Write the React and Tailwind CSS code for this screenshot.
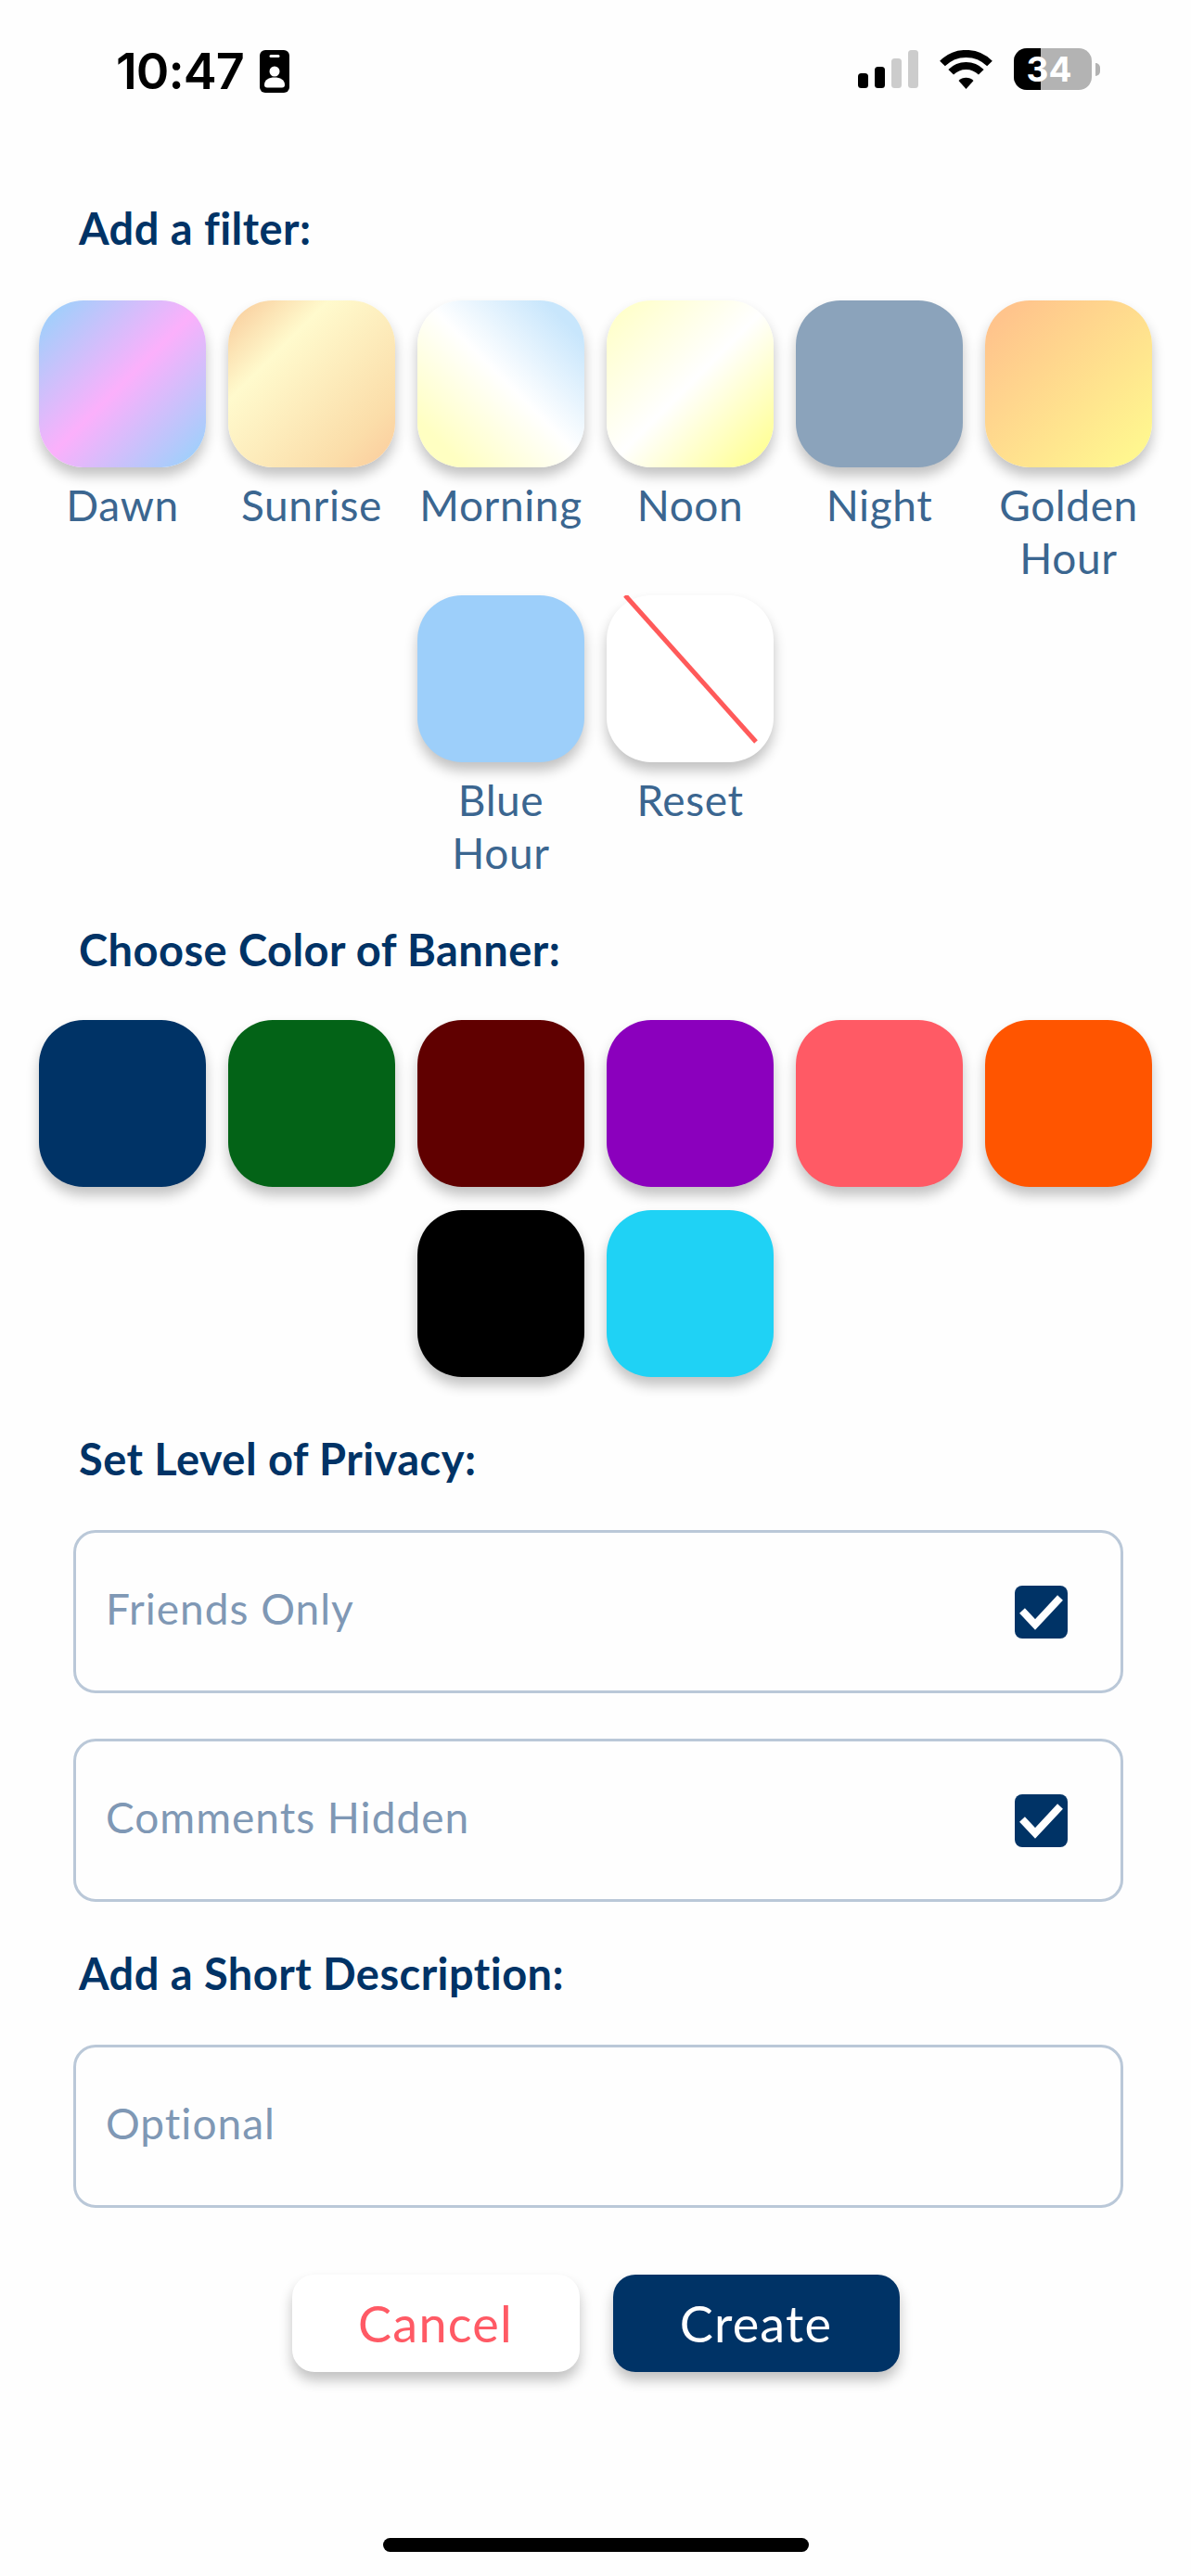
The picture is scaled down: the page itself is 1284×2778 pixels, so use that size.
const font = { fontFamily: '"Lato", "Noto Sans", sans-serif' };

function Swatch({ className = "", children }) {
  return (
    <div className={`relative w-[180px] h-[180px] rounded-[48px] shadow-[0_9px_14px_rgba(0,0,0,0.24)] ${className}`}>
      {children}
    </div>
  );
}

function Filter({ label, className, children }) {
  return (
    <div className="w-[180px] flex flex-col items-center">
      <Swatch className={className}>{children}</Swatch>
      <div className="mt-[12px] text-center text-[46px] leading-[57px] tracking-[0.6px] text-[#3b6690]">{label}</div>
    </div>
  );
}

function Title({ children, className = "" }) {
  return <div className={`px-[85px] text-[47px] leading-[57px] font-bold tracking-[0.45px] text-[#003366] ${className}`}>{children}</div>;
}

function CheckBox() {
  return (
    <div className="w-[57px] h-[57px] rounded-[8px] bg-[#003366]">
      <svg width="57" height="57" viewBox="0 0 57 57" fill="none">
        <path d="M8 27 L22 42 L49 13" stroke="#fff" strokeWidth="8" />
      </svg>
    </div>
  );
}

function Field({ label, checked, className = "" }) {
  return (
    <div className={`ml-[79px] w-[1132px] h-[176px] rounded-[24px] border-[3px] border-[#bac8d8] flex items-center justify-between pl-[32px] pr-[57px] ${className}`}>
      <span className="pb-[7px] text-[46px] tracking-[1px] text-[#7f98b5]">{label}</span>
      {checked && <CheckBox />}
    </div>
  );
}

function StatusBar() {
  return (
    <div className="h-[150px] pt-[54px] pl-[125px] pr-[98px] flex items-start justify-between">
      <div className="flex items-start">
        <span className="text-[54px] leading-[46px] font-semibold text-black tracking-[-1px]" style={{ fontFamily: '"Inter", sans-serif' }}>10:47</span>
        <svg className="ml-[17px]" width="32" height="46" viewBox="0 0 32 46">
          <rect width="32" height="46" rx="6" fill="#000" />
          <rect x="10.5" y="5" width="11" height="3" rx="1.5" fill="#fff" />
          <circle cx="16" cy="23" r="5.5" fill="#fff" />
          <path d="M5 37.5 C5 32 10 29.5 16 29.5 C22 29.5 27 32 27 37.5 C27 39.5 26 40.5 24 40.5 L8 40.5 C6 40.5 5 39.5 5 37.5 Z" fill="#fff" />
        </svg>
      </div>
      <div className="flex items-start">
        <svg width="65" height="41" viewBox="0 0 65 41">
          <rect x="0" y="25" width="11" height="16" rx="3.5" fill="#000" />
          <rect x="18" y="18" width="11" height="23" rx="3.5" fill="#000" />
          <rect x="36" y="9" width="11" height="32" rx="3.5" fill="#ccc" />
          <rect x="54" y="0" width="11" height="41" rx="3.5" fill="#ccc" />
        </svg>
        <svg className="ml-[23px]" width="57" height="42" viewBox="0 0 57 42" fill="none">
          <path d="M3 14.5 A36 36 0 0 1 54 14.5" stroke="#000" strokeWidth="8" />
          <path d="M12.2 23.7 A23 23 0 0 1 44.8 23.7" stroke="#000" strokeWidth="8" />
          <path d="M28.5 42 L20.5 33 A11.3 11.3 0 0 1 36.5 33 Z" fill="#000" />
        </svg>
        <div className="ml-[23px] relative flex items-center -mt-[2px]">
          <div className="relative w-[84px] h-[45px] rounded-[14px] overflow-hidden flex bg-[#b3b3b3]">
            <div className="w-[29px] h-full bg-black" />
          </div>
          <div className="absolute left-0 top-0 w-[84px] h-[45px] flex items-center justify-center pr-[8px] text-[37px] font-bold text-white" style={{ fontFamily: '"Inter", sans-serif' }}>34</div>
          <div className="ml-[4px] w-[5px] h-[14px] rounded-r-full bg-[#b3b3b3]" />
        </div>
      </div>
    </div>
  );
}

export default function App() {
  return (
    <div className="relative w-[1284px] h-[2778px] bg-[#fefefe] overflow-hidden" style={font}>
      <StatusBar />
      <Title className="mt-[68px]">Add a filter:</Title>

      <div className="mt-[49px] px-[42px] flex flex-wrap justify-center gap-x-[24px] gap-y-[12px]">
        <Filter label="Dawn" className="bg-[linear-gradient(135deg,#a1cffb_7%,#fbb0fb_50%,#a1cffb_93%)]" />
        <Filter label="Sunrise" className="bg-[linear-gradient(135deg,#fad5a5_8%,#fffacd_30%,#fbdda9_80%,#fbcf9f_95%)]" />
        <Filter label="Morning" className="bg-[linear-gradient(45deg,#ffffc2_14%,#ffffff_52%,#c8e6fc_88%)]" />
        <Filter label="Noon" className="bg-[linear-gradient(135deg,#ffffcc_8%,#ffffff_50%,#ffff99_92%)]" />
        <Filter label="Night" className="bg-[#8ba3bb]" />
        <Filter label="Golden Hour" className="bg-[linear-gradient(135deg,#ffc48c_10%,#fff68f_90%)]" />
        <Filter label="Blue Hour" className="bg-[#9dcffa]" />
        <Filter label="Reset" className="bg-white">
          <svg className="absolute inset-0" width="180" height="180" viewBox="0 0 180 180">
            <line x1="20" y1="0" x2="161" y2="158" stroke="#ff5a5a" strokeWidth="5" />
          </svg>
        </Filter>
      </div>

      <Title className="mt-[48px]">Choose Color of Banner:</Title>

      <div className="mt-[47px] px-[42px] flex flex-wrap justify-center gap-x-[24px] gap-y-[25px]">
        <Swatch className="bg-[#003366]" />
        <Swatch className="bg-[#036317]" />
        <Swatch className="bg-[#600000]" />
        <Swatch className="bg-[#8b00bd]" />
        <Swatch className="bg-[#ff5a65]" />
        <Swatch className="bg-[#ff5500]" />
        <Swatch className="bg-black" />
        <Swatch className="bg-[#1fd2f5]" />
      </div>

      <Title className="mt-[60px]">Set Level of Privacy:</Title>
      <Field label="Friends Only" checked className="mt-[48px]" />
      <Field label="Comments Hidden" checked className="mt-[49px]" />
      <Title className="mt-[49px]">Add a Short Description:</Title>
      <Field label="Optional" className="mt-[48px]" />

      <div className="mt-[72px] flex justify-center gap-[36px]">
        <button className="w-[310px] h-[105px] rounded-[24px] bg-white shadow-[0_9px_14px_rgba(0,0,0,0.24)] text-[54px] tracking-[1.2px] text-[#ff5a65]">Cancel</button>
        <button className="w-[309px] h-[105px] rounded-[24px] bg-[#003366] shadow-[0_9px_14px_rgba(0,0,0,0.24)] text-[54px] tracking-[1.2px] text-white">Create</button>
      </div>

      <div className="mt-[179px] mx-auto w-[459px] h-[15px] rounded-[8px] bg-black" />
    </div>
  );
}
